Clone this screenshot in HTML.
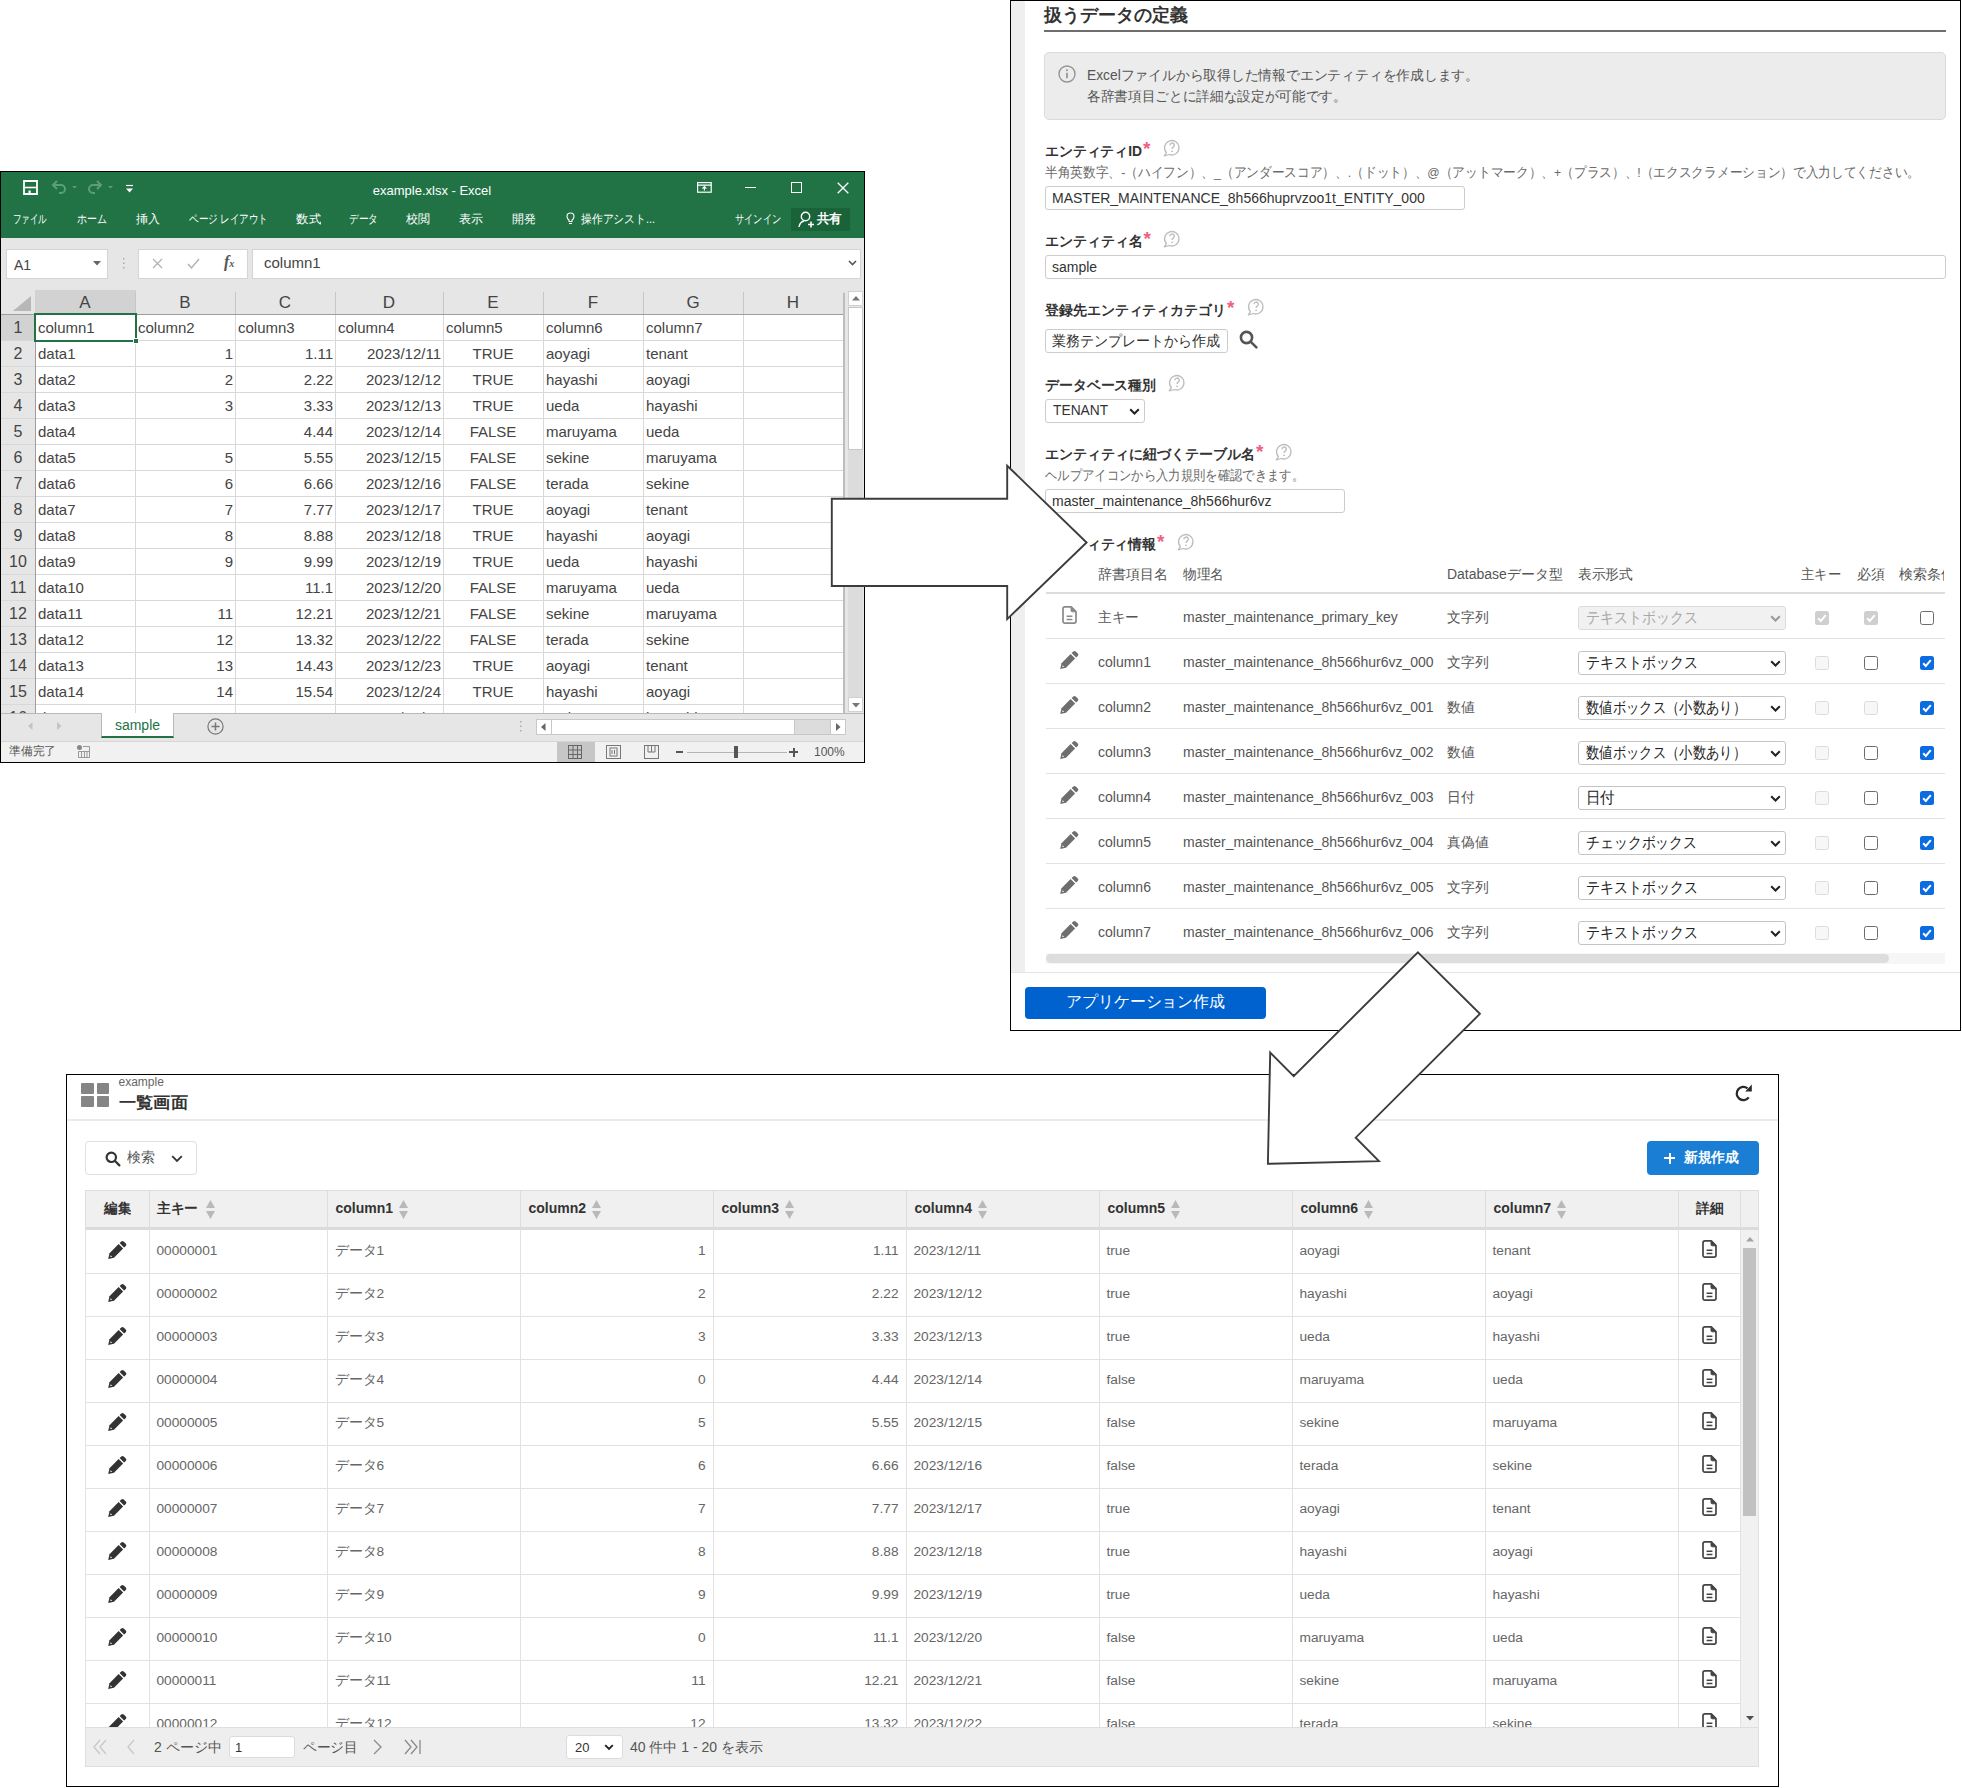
<!DOCTYPE html>
<html lang="ja"><head><meta charset="utf-8"><title>flow</title>
<style>
*{box-sizing:border-box;margin:0;padding:0}
html,body{width:1962px;height:1788px;background:#fff;overflow:hidden}
body{position:relative;font-family:"Liberation Sans",sans-serif;color:#333}
.a{position:absolute}
.t{position:absolute;white-space:nowrap;line-height:1}
.fit{display:inline-block;white-space:nowrap;transform-origin:0 50%}
svg{position:absolute;overflow:visible}
/* ---------- excel ---------- */
#xl{left:0;top:171px;width:865px;height:592px;background:#e6e6e6;border:1px solid #000;overflow:hidden}
#xl .g{background:#217346}
#xl .w{color:#fff}
#xl .cell{position:absolute;white-space:nowrap;font-size:15px;line-height:26px;color:#444;height:26px}
#xl .rh{position:absolute;left:0;width:34px;text-align:center;font-size:16px;line-height:26px;height:26px;color:#444}
#xl .ch{position:absolute;top:118px;height:24px;text-align:center;font-size:17px;line-height:25px;color:#444}
/* ---------- form ---------- */
#fm{left:1010px;top:0;width:951px;height:1031px;background:#fff;border:1px solid #000;overflow:hidden}
#fm .lb{position:absolute;white-space:nowrap;font-size:14px;font-weight:bold;color:#333;line-height:16px}
#fm .rq{position:absolute;color:#f0607f;font-size:19px;line-height:19px;font-weight:bold}
#fm .hint{position:absolute;white-space:nowrap;font-size:13.5px;color:#6a6a6a;line-height:16px}
#fm .in{position:absolute;height:24px;border:1px solid #ccc;border-radius:3px;background:#fff;font-size:14px;line-height:22px;padding-left:6px;color:#333;white-space:nowrap;overflow:hidden}
#fm .td{position:absolute;white-space:nowrap;font-size:14px;color:#555;line-height:16px}
#fm .sel{position:absolute;left:567px;width:208px;height:24px;border:1px solid #c4c4c4;border-radius:3px;background:#fff;font-size:16px;line-height:22px;padding-left:7px;color:#222;white-space:nowrap;overflow:hidden}
#fm .cb{position:absolute;width:14px;height:14px;border-radius:2.5px}
#fm .cb.u{border:1.3px solid #6b6b6b;background:#fff}
#fm .cb.d{border:1px solid #dcdcdc;background:#f7f7f7}
#fm .cb.c{background:#0b6be0}
#fm .cb.dc{background:#cfcfcf}
#fm .rl{position:absolute;left:35px;width:899px;height:1px;background:#e2e2e2}
/* ---------- list ---------- */
#ls{left:66px;top:1074px;width:1713px;height:713px;background:#fff;border:1px solid #000;overflow:hidden}
#ls .th{position:absolute;top:115px;height:39px;font-size:14px;font-weight:bold;color:#333;line-height:36px;white-space:nowrap;border-left:1px solid #ddd}
#ls .c{position:absolute;white-space:nowrap;font-size:13.7px;color:#666;line-height:16px}
#ls .vl{position:absolute;top:155px;width:1px;height:497px;background:#e2e2e2}
#ls .hl{position:absolute;left:18px;width:1655px;height:1px;background:#e2e2e2}
</style></head><body>
<div id="xl" class="a">
<div class="a g" style="left:0;top:0;width:863px;height:66px"></div>
<svg style="left:22px;top:8px" width="16" height="15" viewBox="0 0 16 15"><path d="M1 1h13v13H1z" fill="none" stroke="#fff" stroke-width="1.8"/><path d="M1 7.5h13" stroke="#fff" stroke-width="1.6"/><rect x="5.5" y="10.5" width="2.2" height="3" fill="#fff"/></svg>
<svg style="left:50px;top:8px" width="70" height="14" viewBox="0 0 70 14" fill="none" stroke="#5e9c7b" stroke-width="2"><path d="M2 5h8a4 4 0 0 1 0 8H8"/><path d="M6 1L2 5l4 4"/><path d="M50 5h-8a4 4 0 0 0 0 8h2"/><path d="M46 1l4 4-4 4"/><path d="M21 6l2.5 2.5L26 6z" fill="#5e9c7b" stroke="none"/><path d="M57 6l2.5 2.5L62 6z" fill="#5e9c7b" stroke="none"/></svg>
<svg style="left:125px;top:13px" width="8" height="8" viewBox="0 0 8 8"><path d="M0 .5h7" stroke="#fff" stroke-width="1.2"/><path d="M0 3.5h7L3.5 7.5z" fill="#fff"/></svg>
<div class="t w" style="left:331px;top:12px;width:200px;text-align:center;font-size:13px">example.xlsx - Excel</div>
<svg style="left:696px;top:10px" width="15" height="11" viewBox="0 0 15 11" fill="none" stroke="#fff" stroke-width="1.2"><rect x=".6" y=".6" width="13.6" height="9.6"/><path d="M.6 3.2h13.6M7.4 8.6V4.8M5.4 6.6l2-2 2 2"/></svg>
<div class="a" style="left:744px;top:15px;width:11px;height:1.4px;background:#fff"></div>
<div class="a" style="left:790px;top:10px;width:11px;height:11px;border:1.3px solid #fff"></div>
<svg style="left:836px;top:10px" width="12" height="12" viewBox="0 0 12 12"><path d="M.7.7l10.6 10.6M11.3.7L.7 11.3" stroke="#fff" stroke-width="1.3"/></svg>
<div class="t w" style="left:12px;top:41px;font-size:12px"><span class="fit" style="transform:scaleX(0.7083)">ファイル</span></div>
<div class="t w" style="left:76px;top:41px;font-size:12px"><span class="fit" style="transform:scaleX(0.8333)">ホーム</span></div>
<div class="t w" style="left:135px;top:41px;font-size:12px"><span class="fit" style="transform:scaleX(1.0000)">挿入</span></div>
<div class="t w" style="left:188px;top:41px;font-size:12px"><span class="fit" style="transform:scaleX(0.7952)">ページ レイアウト</span></div>
<div class="t w" style="left:295px;top:41px;font-size:12px"><span class="fit" style="transform:scaleX(1.0417)">数式</span></div>
<div class="t w" style="left:348px;top:41px;font-size:12px"><span class="fit" style="transform:scaleX(0.8056)">データ</span></div>
<div class="t w" style="left:405px;top:41px;font-size:12px"><span class="fit" style="transform:scaleX(1.0000)">校閲</span></div>
<div class="t w" style="left:458px;top:41px;font-size:12px"><span class="fit" style="transform:scaleX(1.0000)">表示</span></div>
<div class="t w" style="left:511px;top:41px;font-size:12px"><span class="fit" style="transform:scaleX(1.0000)">開発</span></div>
<svg style="left:565px;top:40px" width="9" height="13" viewBox="0 0 9 13" fill="none" stroke="#fff" stroke-width="1.1"><path d="M3 9.5V8C1.6 7 1 6 1 4.5a3.5 3.5 0 0 1 7 0C8 6 7.400 7 6 8v1.500z"/><path d="M3 11.500h3"/></svg>
<div class="t w" style="left:580px;top:41px;font-size:12px"><span class="fit" style="transform:scaleX(0.9023)">操作アシスト...</span></div>
<div class="t w" style="left:734px;top:41px;font-size:12px"><span class="fit" style="transform:scaleX(0.7667)">サインイン</span></div>
<div class="a" style="left:790px;top:36px;width:59px;height:23px;background:#1a6238"></div>
<svg style="left:797px;top:39px" width="17" height="17" viewBox="0 0 17 17" fill="none" stroke="#fff" stroke-width="1.4"><circle cx="7.5" cy="5.5" r="4.2"/><path d="M1 16c.6-3.500 3-5.500 5-6"/><path d="M10 13.500h6M13 10.500v6" stroke-width="1.6"/></svg>
<div class="t w" style="left:816px;top:41px;font-size:12.5px;font-weight:bold"><span class="fit" style="transform:scaleX(0.9615)">共有</span></div>
<div class="a" style="left:5px;top:77px;width:102px;height:30px;background:#fff;border:1px solid #d4d4d4"></div>
<div class="t" style="left:13px;top:86px;font-size:14px;color:#444">A1</div>
<svg style="left:92px;top:89px" width="9" height="5" viewBox="0 0 9 5"><path d="M0 0h8L4 4.500z" fill="#666"/></svg>
<svg style="left:122px;top:86px" width="2" height="12" viewBox="0 0 2 12" fill="#aaa"><rect y="0" width="1.500" height="1.500"/><rect y="4.500" width="1.500" height="1.500"/><rect y="9" width="1.500" height="1.500"/></svg>
<div class="a" style="left:137px;top:77px;width:110px;height:30px;background:#fff;border:1px solid #d4d4d4"></div>
<svg style="left:151px;top:86px" width="11" height="11" viewBox="0 0 11 11"><path d="M1 1l9 9M10 1l-9 9" stroke="#b0b0b0" stroke-width="1.2"/></svg>
<svg style="left:186px;top:86px" width="13" height="11" viewBox="0 0 13 11"><path d="M1 6l3.500 4L12 1" fill="none" stroke="#b0b0b0" stroke-width="1.4"/></svg>
<div class="t" style="left:223px;top:82px;font-size:16px;font-family:'Liberation Serif',serif;font-style:italic;font-weight:bold;color:#555">f<span style="font-size:10px">x</span></div>
<div class="a" style="left:251px;top:77px;width:609px;height:30px;background:#fff;border:1px solid #d4d4d4"></div>
<div class="t" style="left:263px;top:83px;font-size:15px;color:#444">column1</div>
<svg style="left:847px;top:88px" width="9" height="6" viewBox="0 0 9 6"><path d="M1 1l3.500 3.500L8 1" fill="none" stroke="#555" stroke-width="1.600"/></svg>
<div class="a" style="left:34px;top:143px;width:808px;height:398px;background:#fff"></div>
<div class="a" style="left:34px;top:118px;width:101px;height:24px;background:#d2d2d2"></div>
<div class="a" style="left:0;top:143px;width:34px;height:26px;background:#d2d2d2"></div>
<svg style="left:12px;top:124px" width="19" height="15" viewBox="0 0 19 15"><path d="M18 0v15H0z" fill="#b7b7b7"/></svg>
<div class="ch" style="left:34px;width:100px">A</div>
<div class="ch" style="left:134px;width:100px">B</div>
<div class="ch" style="left:234px;width:100px">C</div>
<div class="ch" style="left:334px;width:108px">D</div>
<div class="ch" style="left:442px;width:100px">E</div>
<div class="ch" style="left:542px;width:100px">F</div>
<div class="ch" style="left:642px;width:100px">G</div>
<div class="ch" style="left:742px;width:100px">H</div>
<div class="a" style="left:134px;top:120px;width:1px;height:22px;background:#c6c6c6"></div>
<div class="a" style="left:234px;top:120px;width:1px;height:22px;background:#c6c6c6"></div>
<div class="a" style="left:334px;top:120px;width:1px;height:22px;background:#c6c6c6"></div>
<div class="a" style="left:442px;top:120px;width:1px;height:22px;background:#c6c6c6"></div>
<div class="a" style="left:542px;top:120px;width:1px;height:22px;background:#c6c6c6"></div>
<div class="a" style="left:642px;top:120px;width:1px;height:22px;background:#c6c6c6"></div>
<div class="a" style="left:742px;top:120px;width:1px;height:22px;background:#c6c6c6"></div>
<div class="a" style="left:842px;top:120px;width:1px;height:22px;background:#c6c6c6"></div>
<div class="a" style="left:134px;top:143px;width:1px;height:398px;background:#d8d8d8"></div>
<div class="a" style="left:234px;top:143px;width:1px;height:398px;background:#d8d8d8"></div>
<div class="a" style="left:334px;top:143px;width:1px;height:398px;background:#d8d8d8"></div>
<div class="a" style="left:442px;top:143px;width:1px;height:398px;background:#d8d8d8"></div>
<div class="a" style="left:542px;top:143px;width:1px;height:398px;background:#d8d8d8"></div>
<div class="a" style="left:642px;top:143px;width:1px;height:398px;background:#d8d8d8"></div>
<div class="a" style="left:742px;top:143px;width:1px;height:398px;background:#d8d8d8"></div>
<div class="a" style="left:0;top:168px;width:842px;height:1px;background:#d8d8d8"></div>
<div class="rh" style="top:143px">1</div>
<div class="a" style="left:0;top:194px;width:842px;height:1px;background:#d8d8d8"></div>
<div class="rh" style="top:169px">2</div>
<div class="a" style="left:0;top:220px;width:842px;height:1px;background:#d8d8d8"></div>
<div class="rh" style="top:195px">3</div>
<div class="a" style="left:0;top:246px;width:842px;height:1px;background:#d8d8d8"></div>
<div class="rh" style="top:221px">4</div>
<div class="a" style="left:0;top:272px;width:842px;height:1px;background:#d8d8d8"></div>
<div class="rh" style="top:247px">5</div>
<div class="a" style="left:0;top:298px;width:842px;height:1px;background:#d8d8d8"></div>
<div class="rh" style="top:273px">6</div>
<div class="a" style="left:0;top:324px;width:842px;height:1px;background:#d8d8d8"></div>
<div class="rh" style="top:299px">7</div>
<div class="a" style="left:0;top:350px;width:842px;height:1px;background:#d8d8d8"></div>
<div class="rh" style="top:325px">8</div>
<div class="a" style="left:0;top:376px;width:842px;height:1px;background:#d8d8d8"></div>
<div class="rh" style="top:351px">9</div>
<div class="a" style="left:0;top:402px;width:842px;height:1px;background:#d8d8d8"></div>
<div class="rh" style="top:377px">10</div>
<div class="a" style="left:0;top:428px;width:842px;height:1px;background:#d8d8d8"></div>
<div class="rh" style="top:403px">11</div>
<div class="a" style="left:0;top:454px;width:842px;height:1px;background:#d8d8d8"></div>
<div class="rh" style="top:429px">12</div>
<div class="a" style="left:0;top:480px;width:842px;height:1px;background:#d8d8d8"></div>
<div class="rh" style="top:455px">13</div>
<div class="a" style="left:0;top:506px;width:842px;height:1px;background:#d8d8d8"></div>
<div class="rh" style="top:481px">14</div>
<div class="a" style="left:0;top:532px;width:842px;height:1px;background:#d8d8d8"></div>
<div class="rh" style="top:507px">15</div>
<div class="a" style="left:0;top:558px;width:842px;height:1px;background:#d8d8d8"></div>
<div class="rh" style="top:533px">16</div>
<div class="a" style="left:0;top:142px;width:843px;height:1px;background:#9e9e9e"></div>
<div class="a" style="left:34px;top:143px;width:1px;height:398px;background:#9e9e9e"></div>
<div class="a" style="left:842px;top:121px;width:2px;height:420px;background:#bdbdbd"></div>
<div class="cell" style="left:37px;top:143px">column1</div>
<div class="cell" style="left:137px;top:143px">column2</div>
<div class="cell" style="left:237px;top:143px">column3</div>
<div class="cell" style="left:337px;top:143px">column4</div>
<div class="cell" style="left:445px;top:143px">column5</div>
<div class="cell" style="left:545px;top:143px">column6</div>
<div class="cell" style="left:645px;top:143px">column7</div>
<div class="cell" style="left:37px;top:169px">data1</div>
<div class="cell" style="left:134px;width:98px;text-align:right;top:169px">1</div>
<div class="cell" style="left:234px;width:98px;text-align:right;top:169px">1.11</div>
<div class="cell" style="left:334px;width:106px;text-align:right;top:169px">2023/12/11</div>
<div class="cell" style="left:442px;width:100px;text-align:center;top:169px">TRUE</div>
<div class="cell" style="left:545px;top:169px">aoyagi</div>
<div class="cell" style="left:645px;top:169px">tenant</div>
<div class="cell" style="left:37px;top:195px">data2</div>
<div class="cell" style="left:134px;width:98px;text-align:right;top:195px">2</div>
<div class="cell" style="left:234px;width:98px;text-align:right;top:195px">2.22</div>
<div class="cell" style="left:334px;width:106px;text-align:right;top:195px">2023/12/12</div>
<div class="cell" style="left:442px;width:100px;text-align:center;top:195px">TRUE</div>
<div class="cell" style="left:545px;top:195px">hayashi</div>
<div class="cell" style="left:645px;top:195px">aoyagi</div>
<div class="cell" style="left:37px;top:221px">data3</div>
<div class="cell" style="left:134px;width:98px;text-align:right;top:221px">3</div>
<div class="cell" style="left:234px;width:98px;text-align:right;top:221px">3.33</div>
<div class="cell" style="left:334px;width:106px;text-align:right;top:221px">2023/12/13</div>
<div class="cell" style="left:442px;width:100px;text-align:center;top:221px">TRUE</div>
<div class="cell" style="left:545px;top:221px">ueda</div>
<div class="cell" style="left:645px;top:221px">hayashi</div>
<div class="cell" style="left:37px;top:247px">data4</div>
<div class="cell" style="left:234px;width:98px;text-align:right;top:247px">4.44</div>
<div class="cell" style="left:334px;width:106px;text-align:right;top:247px">2023/12/14</div>
<div class="cell" style="left:442px;width:100px;text-align:center;top:247px">FALSE</div>
<div class="cell" style="left:545px;top:247px">maruyama</div>
<div class="cell" style="left:645px;top:247px">ueda</div>
<div class="cell" style="left:37px;top:273px">data5</div>
<div class="cell" style="left:134px;width:98px;text-align:right;top:273px">5</div>
<div class="cell" style="left:234px;width:98px;text-align:right;top:273px">5.55</div>
<div class="cell" style="left:334px;width:106px;text-align:right;top:273px">2023/12/15</div>
<div class="cell" style="left:442px;width:100px;text-align:center;top:273px">FALSE</div>
<div class="cell" style="left:545px;top:273px">sekine</div>
<div class="cell" style="left:645px;top:273px">maruyama</div>
<div class="cell" style="left:37px;top:299px">data6</div>
<div class="cell" style="left:134px;width:98px;text-align:right;top:299px">6</div>
<div class="cell" style="left:234px;width:98px;text-align:right;top:299px">6.66</div>
<div class="cell" style="left:334px;width:106px;text-align:right;top:299px">2023/12/16</div>
<div class="cell" style="left:442px;width:100px;text-align:center;top:299px">FALSE</div>
<div class="cell" style="left:545px;top:299px">terada</div>
<div class="cell" style="left:645px;top:299px">sekine</div>
<div class="cell" style="left:37px;top:325px">data7</div>
<div class="cell" style="left:134px;width:98px;text-align:right;top:325px">7</div>
<div class="cell" style="left:234px;width:98px;text-align:right;top:325px">7.77</div>
<div class="cell" style="left:334px;width:106px;text-align:right;top:325px">2023/12/17</div>
<div class="cell" style="left:442px;width:100px;text-align:center;top:325px">TRUE</div>
<div class="cell" style="left:545px;top:325px">aoyagi</div>
<div class="cell" style="left:645px;top:325px">tenant</div>
<div class="cell" style="left:37px;top:351px">data8</div>
<div class="cell" style="left:134px;width:98px;text-align:right;top:351px">8</div>
<div class="cell" style="left:234px;width:98px;text-align:right;top:351px">8.88</div>
<div class="cell" style="left:334px;width:106px;text-align:right;top:351px">2023/12/18</div>
<div class="cell" style="left:442px;width:100px;text-align:center;top:351px">TRUE</div>
<div class="cell" style="left:545px;top:351px">hayashi</div>
<div class="cell" style="left:645px;top:351px">aoyagi</div>
<div class="cell" style="left:37px;top:377px">data9</div>
<div class="cell" style="left:134px;width:98px;text-align:right;top:377px">9</div>
<div class="cell" style="left:234px;width:98px;text-align:right;top:377px">9.99</div>
<div class="cell" style="left:334px;width:106px;text-align:right;top:377px">2023/12/19</div>
<div class="cell" style="left:442px;width:100px;text-align:center;top:377px">TRUE</div>
<div class="cell" style="left:545px;top:377px">ueda</div>
<div class="cell" style="left:645px;top:377px">hayashi</div>
<div class="cell" style="left:37px;top:403px">data10</div>
<div class="cell" style="left:234px;width:98px;text-align:right;top:403px">11.1</div>
<div class="cell" style="left:334px;width:106px;text-align:right;top:403px">2023/12/20</div>
<div class="cell" style="left:442px;width:100px;text-align:center;top:403px">FALSE</div>
<div class="cell" style="left:545px;top:403px">maruyama</div>
<div class="cell" style="left:645px;top:403px">ueda</div>
<div class="cell" style="left:37px;top:429px">data11</div>
<div class="cell" style="left:134px;width:98px;text-align:right;top:429px">11</div>
<div class="cell" style="left:234px;width:98px;text-align:right;top:429px">12.21</div>
<div class="cell" style="left:334px;width:106px;text-align:right;top:429px">2023/12/21</div>
<div class="cell" style="left:442px;width:100px;text-align:center;top:429px">FALSE</div>
<div class="cell" style="left:545px;top:429px">sekine</div>
<div class="cell" style="left:645px;top:429px">maruyama</div>
<div class="cell" style="left:37px;top:455px">data12</div>
<div class="cell" style="left:134px;width:98px;text-align:right;top:455px">12</div>
<div class="cell" style="left:234px;width:98px;text-align:right;top:455px">13.32</div>
<div class="cell" style="left:334px;width:106px;text-align:right;top:455px">2023/12/22</div>
<div class="cell" style="left:442px;width:100px;text-align:center;top:455px">FALSE</div>
<div class="cell" style="left:545px;top:455px">terada</div>
<div class="cell" style="left:645px;top:455px">sekine</div>
<div class="cell" style="left:37px;top:481px">data13</div>
<div class="cell" style="left:134px;width:98px;text-align:right;top:481px">13</div>
<div class="cell" style="left:234px;width:98px;text-align:right;top:481px">14.43</div>
<div class="cell" style="left:334px;width:106px;text-align:right;top:481px">2023/12/23</div>
<div class="cell" style="left:442px;width:100px;text-align:center;top:481px">TRUE</div>
<div class="cell" style="left:545px;top:481px">aoyagi</div>
<div class="cell" style="left:645px;top:481px">tenant</div>
<div class="cell" style="left:37px;top:507px">data14</div>
<div class="cell" style="left:134px;width:98px;text-align:right;top:507px">14</div>
<div class="cell" style="left:234px;width:98px;text-align:right;top:507px">15.54</div>
<div class="cell" style="left:334px;width:106px;text-align:right;top:507px">2023/12/24</div>
<div class="cell" style="left:442px;width:100px;text-align:center;top:507px">TRUE</div>
<div class="cell" style="left:545px;top:507px">hayashi</div>
<div class="cell" style="left:645px;top:507px">aoyagi</div>
<div class="cell" style="left:37px;top:533px">data15</div>
<div class="cell" style="left:134px;width:98px;text-align:right;top:533px">15</div>
<div class="cell" style="left:234px;width:98px;text-align:right;top:533px">16.65</div>
<div class="cell" style="left:334px;width:106px;text-align:right;top:533px">2023/12/25</div>
<div class="cell" style="left:442px;width:100px;text-align:center;top:533px">TRUE</div>
<div class="cell" style="left:545px;top:533px">ueda</div>
<div class="cell" style="left:645px;top:533px">hayashi</div>
<div class="a" style="left:33px;top:141px;width:103px;height:29px;border:2px solid #217346"></div>
<div class="a" style="left:132px;top:166px;width:6px;height:6px;background:#217346;border:1px solid #fff"></div>
<div class="a" style="left:34px;top:141px;width:101px;height:2px;background:#217346"></div>
<div class="a" style="left:844px;top:118px;width:19px;height:423px;background:#e6e6e6"></div>
<div class="a" style="left:847px;top:136px;width:15px;height:404px;background:#dcdcdc"></div>
<div class="a" style="left:847px;top:119px;width:15px;height:15px;background:#fff;border:1px solid #d0d0d0"></div>
<svg style="left:851px;top:124px" width="8" height="5" viewBox="0 0 8 5"><path d="M0 4.500h8L4 0z" fill="#777"/></svg>
<div class="a" style="left:847px;top:135px;width:15px;height:143px;background:#fff;border:1px solid #c8c8c8"></div>
<div class="a" style="left:847px;top:525px;width:15px;height:15px;background:#fff;border:1px solid #d0d0d0"></div>
<svg style="left:851px;top:531px" width="8" height="5" viewBox="0 0 8 5"><path d="M0 0h8L4 4.500z" fill="#777"/></svg>
<div class="a" style="left:0;top:541px;width:863px;height:28px;background:#e6e6e6;border-top:1px solid #b9b9b9"></div>
<svg style="left:27px;top:550px" width="34" height="9" viewBox="0 0 34 9" fill="#c4c4c4"><path d="M4.500 0v8L0 4z"/><path d="M29 0v8l4.500-4z"/></svg>
<div class="a" style="left:100px;top:541px;width:73px;height:25px;background:#fff;border-left:1px solid #b9b9b9;border-right:1px solid #b9b9b9;border-bottom:2px solid #217346"></div>
<div class="t" style="left:100px;top:546px;width:73px;text-align:center;font-size:14px;color:#217346">sample</div>
<svg style="left:206px;top:546px" width="17" height="17" viewBox="0 0 17 17" fill="none" stroke="#777" stroke-width="1.2"><circle cx="8.500" cy="8.500" r="7.600"/><path d="M8.500 4.500v8M4.500 8.500h8" stroke-width="1.500"/></svg>
<svg style="left:519px;top:549px" width="2" height="12" viewBox="0 0 2 12" fill="#aaa"><rect y="0" width="1.500" height="1.500"/><rect y="4.500" width="1.500" height="1.500"/><rect y="9" width="1.500" height="1.500"/></svg>
<div class="a" style="left:535px;top:547px;width:310px;height:16px;background:#dcdcdc;border:1px solid #c8c8c8"></div>
<div class="a" style="left:535px;top:547px;width:16px;height:16px;background:#fff;border:1px solid #c8c8c8"></div>
<div class="a" style="left:829px;top:547px;width:16px;height:16px;background:#fff;border:1px solid #c8c8c8"></div>
<div class="a" style="left:550px;top:547px;width:244px;height:16px;background:#fff;border:1px solid #c8c8c8"></div>
<svg style="left:540px;top:551px" width="5" height="8" viewBox="0 0 5 8"><path d="M4.500 0v8L0 4z" fill="#666"/></svg>
<svg style="left:835px;top:551px" width="5" height="8" viewBox="0 0 5 8"><path d="M0 0v8l4.500-4z" fill="#666"/></svg>
<div class="a" style="left:0;top:569px;width:863px;height:21px;background:#f1f1f1;border-top:1px solid #d6d6d6"></div>
<div class="t" style="left:8px;top:574px;font-size:11.5px;color:#555"><span class="fit" style="transform:scaleX(0.9792)">準備完了</span></div>
<svg style="left:76px;top:573px" width="13" height="13" viewBox="0 0 13 13"><circle cx="2.500" cy="2.500" r="2.500" fill="#888"/><path d="M6 1.500h6.500v11H1.500V6.500M4.500 6.500v6M7.500 6.500v6M10 6.500v6M1.500 6.500h11" fill="none" stroke="#999" stroke-width="1"/></svg>
<div class="a" style="left:556px;top:570px;width:38px;height:20px;background:#c6c6c6"></div>
<svg style="left:567px;top:573px" width="14" height="14" viewBox="0 0 14 14" fill="none" stroke="#666" stroke-width="1"><rect x=".500" y=".500" width="13" height="13"/><path d="M.500 5h13M.500 9.500h13M5 .500v13M9.500 .500v13"/></svg>
<svg style="left:605px;top:573px" width="15" height="14" viewBox="0 0 15 14" fill="none" stroke="#777" stroke-width="1"><rect x=".500" y=".500" width="14" height="13"/><rect x="4" y="3" width="7" height="8"/><path d="M6 5v4M8.500 5v4"/></svg>
<svg style="left:643px;top:573px" width="15" height="14" viewBox="0 0 15 14" fill="none" stroke="#777" stroke-width="1"><rect x=".500" y=".500" width="14" height="13"/><path d="M4 .500v6.500h7V.500M7.500 .500v6.500"/></svg>
<div class="a" style="left:675px;top:579px;width:7px;height:2px;background:#555"></div>
<div class="a" style="left:686px;top:580px;width:100px;height:1px;background:#b5b5b5"></div>
<div class="a" style="left:733px;top:574px;width:4px;height:12px;background:#555"></div>
<div class="a" style="left:788px;top:579px;width:9px;height:2px;background:#555"></div>
<div class="a" style="left:791.500px;top:575.500px;width:2px;height:9px;background:#555"></div>
<div class="t" style="left:813px;top:574px;font-size:12px;color:#555">100%</div>
</div>
<div id="fm" class="a">
<div class="a" style="left:0;top:0;width:14px;height:971px;background:#efefef"></div>
<div class="t" style="left:33px;top:5px;font-size:18px;font-weight:bold;color:#333"><span class="fit" style="transform:scaleX(1.0000)">扱うデータの定義</span></div>
<div class="a" style="left:33px;top:29px;width:902px;height:2px;background:#6e6e6e"></div>
<div class="a" style="left:33px;top:51px;width:902px;height:68px;background:#ececec;border:1px solid #dadada;border-radius:5px"></div>
<svg style="left:46.500px;top:63.700px" width="18" height="18" viewBox="0 0 18 18" fill="none" stroke="#959595" stroke-width="1.400"><circle cx="9" cy="9" r="8"/><path d="M9 7.800v5.400" stroke-width="1.700"/><circle cx="9" cy="5.200" r="1" fill="#959595" stroke="none"/></svg>
<div class="t" style="left:76px;top:67px;font-size:14px;color:#555"><span class="fit" style="transform:scaleX(0.9843)">Excelファイルから取得した情報でエンティティを作成します。</span></div>
<div class="t" style="left:76px;top:88px;font-size:14px;color:#555"><span class="fit" style="transform:scaleX(0.9756)">各辞書項目ごとに詳細な設定が可能です。</span></div>
<div class="lb" style="left:34px;top:142px"><span class="fit" style="transform:scaleX(0.9898)">エンティティID</span></div>
<div class="rq" style="left:132.0px;top:138px">*</div>
<svg style="left:151.7px;top:138.3px" width="18" height="18" viewBox="0 0 18 18" fill="none" stroke="#bdbdbd" stroke-width="1.3"><path d="M3.400 13.600A7.200 7.200 0 1 1 6.200 15.500L1.300 16.900z" stroke-linejoin="round"/><path d="M6.900 6.300a2.200 2.200 0 1 1 3.300 1.900c-.800 .500-1.100 .900-1.100 1.900" stroke-width="1.400"/><circle cx="9.100" cy="12.300" r=".900" fill="#bdbdbd" stroke="none"/></svg>
<div class="hint" style="left:34px;top:164px"><span class="fit" style="transform:scaleX(0.9066)">半角英数字、-（ハイフン）、_（アンダースコア）、.（ドット）、@（アットマーク）、+（プラス）、!（エクスクラメーション）で入力してください。</span></div>
<div class="in" style="left:34px;top:184.500px;width:420px">MASTER_MAINTENANCE_8h566huprvzoo1t_ENTITY_000</div>
<div class="lb" style="left:34px;top:232px"><span class="fit" style="transform:scaleX(0.9959)">エンティティ名</span></div>
<div class="rq" style="left:132.6px;top:228px">*</div>
<svg style="left:151.7px;top:228.8px" width="18" height="18" viewBox="0 0 18 18" fill="none" stroke="#bdbdbd" stroke-width="1.3"><path d="M3.400 13.600A7.200 7.200 0 1 1 6.200 15.500L1.300 16.900z" stroke-linejoin="round"/><path d="M6.900 6.300a2.200 2.200 0 1 1 3.300 1.900c-.800 .500-1.100 .900-1.100 1.900" stroke-width="1.400"/><circle cx="9.100" cy="12.300" r=".900" fill="#bdbdbd" stroke="none"/></svg>
<div class="in" style="left:34px;top:254px;width:901px">sample</div>
<div class="lb" style="left:34px;top:301px"><span class="fit" style="transform:scaleX(0.9945)">登録先エンティティカテゴリ</span></div>
<div class="rq" style="left:216.0px;top:297px">*</div>
<svg style="left:235.7px;top:297.3px" width="18" height="18" viewBox="0 0 18 18" fill="none" stroke="#bdbdbd" stroke-width="1.3"><path d="M3.400 13.600A7.200 7.200 0 1 1 6.200 15.500L1.300 16.900z" stroke-linejoin="round"/><path d="M6.900 6.300a2.200 2.200 0 1 1 3.300 1.900c-.800 .500-1.100 .900-1.100 1.900" stroke-width="1.400"/><circle cx="9.100" cy="12.300" r=".900" fill="#bdbdbd" stroke="none"/></svg>
<div class="in" style="left:34px;top:328px;width:183px;font-size:14.500px"><span class="fit" style="transform:scaleX(0.9333)">業務テンプレートから作成</span></div>
<svg style="left:228px;top:329px" width="19" height="19" viewBox="0 0 19 19" fill="none" stroke="#555" stroke-width="2.600"><circle cx="7.500" cy="7.500" r="5.600"/><path d="M11.800 11.800l5.600 5.600" stroke-linecap="round"/></svg>
<div class="lb" style="left:34px;top:376px"><span class="fit" style="transform:scaleX(0.9911)">データベース種別</span></div>
<svg style="left:156.7px;top:372.8px" width="18" height="18" viewBox="0 0 18 18" fill="none" stroke="#bdbdbd" stroke-width="1.3"><path d="M3.400 13.600A7.200 7.200 0 1 1 6.200 15.500L1.300 16.900z" stroke-linejoin="round"/><path d="M6.900 6.300a2.200 2.200 0 1 1 3.300 1.900c-.800 .500-1.100 .900-1.100 1.900" stroke-width="1.400"/><circle cx="9.100" cy="12.300" r=".900" fill="#bdbdbd" stroke="none"/></svg>
<div class="in" style="left:34px;top:397.500px;width:100px;font-size:13.800px;padding-left:7px">TENANT<svg style="right:4px;top:8px" width="11" height="7" viewBox="0 0 11 7"><path d="M1.200 1.200l4.300 4.300 4.300-4.300" fill="none" stroke="#222" stroke-width="2"/></svg></div>
<div class="lb" style="left:34px;top:445px"><span class="fit" style="transform:scaleX(1.0000)">エンティティに紐づくテーブル名</span></div>
<div class="rq" style="left:245.0px;top:441px">*</div>
<svg style="left:263.7px;top:441.8px" width="18" height="18" viewBox="0 0 18 18" fill="none" stroke="#bdbdbd" stroke-width="1.3"><path d="M3.400 13.600A7.200 7.200 0 1 1 6.200 15.500L1.300 16.900z" stroke-linejoin="round"/><path d="M6.900 6.300a2.200 2.200 0 1 1 3.300 1.900c-.800 .500-1.100 .900-1.100 1.900" stroke-width="1.400"/><circle cx="9.100" cy="12.300" r=".900" fill="#bdbdbd" stroke="none"/></svg>
<div class="hint" style="left:34px;top:467px"><span class="fit" style="transform:scaleX(0.8810)">ヘルプアイコンから入力規則を確認できます。</span></div>
<div class="in" style="left:34px;top:488px;width:300px">master_maintenance_8h566hur6vz</div>
<div class="lb" style="left:34px;top:535px"><span class="fit" style="transform:scaleX(0.9911)">エンティティ情報</span></div>
<div class="rq" style="left:146.0px;top:531px">*</div>
<svg style="left:165.7px;top:531.8px" width="18" height="18" viewBox="0 0 18 18" fill="none" stroke="#bdbdbd" stroke-width="1.3"><path d="M3.400 13.600A7.200 7.200 0 1 1 6.200 15.500L1.300 16.900z" stroke-linejoin="round"/><path d="M6.900 6.300a2.200 2.200 0 1 1 3.300 1.900c-.800 .500-1.100 .900-1.100 1.900" stroke-width="1.400"/><circle cx="9.100" cy="12.300" r=".900" fill="#bdbdbd" stroke="none"/></svg>
<div class="td" style="left:87px;top:565px"><span class="fit" style="transform:scaleX(1.0000)">辞書項目名</span></div>
<div class="td" style="left:172px;top:565px"><span class="fit" style="transform:scaleX(0.9762)">物理名</span></div>
<div class="td" style="left:436px;top:565px"><span class="fit" style="transform:scaleX(0.9980)">Databaseデータ型</span></div>
<div class="td" style="left:567px;top:565px"><span class="fit" style="transform:scaleX(0.9821)">表示形式</span></div>
<div class="td" style="left:790px;top:565px"><span class="fit" style="transform:scaleX(0.9524)">主キー</span></div>
<div class="td" style="left:846px;top:565px"><span class="fit" style="transform:scaleX(1.0000)">必須</span></div>
<div class="td" style="left:888px;top:565px;width:45px;overflow:hidden"><span class="fit" style="transform:scaleX(1.0000)">検索条件</span></div>
<div class="a" style="left:35px;top:591px;width:899px;height:2px;background:#dcdcdc"></div>
<svg style="left:50.5px;top:604.5px" width="15" height="18" viewBox="0 0 15 18" fill="none" stroke="#8a8a8a" stroke-width="1.7"><path d="M2.900 .900H9.300L14 5.600V15.300a1.900 1.900 0 0 1-1.900 1.900H2.900A1.900 1.900 0 0 1 1 15.300V2.800A1.900 1.900 0 0 1 2.900 .900Z" stroke-linejoin="round"/><path d="M9 .900V4.400a1.400 1.400 0 0 0 1.400 1.400H14Z" fill="#8a8a8a" stroke-width="1"/><path d="M4.600 10.200h5.800M4.600 13.400h5.800" stroke-width="1.500"/></svg>
<div class="td" style="left:87px;top:608px"><span class="fit" style="transform:scaleX(0.9762)">主キー</span></div>
<div class="td" style="left:172px;top:608px">master_maintenance_primary_key</div>
<div class="td" style="left:436px;top:608px"><span class="fit" style="transform:scaleX(0.9857)">文字列</span></div>
<div class="sel" style="top:605px;background:#f1f1f1;color:#a8a8a8;border-color:#dcdcdc"><span class="fit" style="transform:scaleX(0.8750)">テキストボックス</span><svg style="right:4px;top:8px" width="11" height="7" viewBox="0 0 11 7"><path d="M1.200 1.200l4.300 4.300 4.300-4.300" fill="none" stroke="#9a9a9a" stroke-width="2"/></svg></div>
<div class="cb dc" style="left:803.5px;top:609.5px"><svg style="left:0;top:0" width="14" height="14" viewBox="0 0 14 14"><path d="M3.200 7.300l2.600 2.700 5-5.800" fill="none" stroke="#fff" stroke-width="2"/></svg></div>
<div class="cb dc" style="left:852.7px;top:609.5px"><svg style="left:0;top:0" width="14" height="14" viewBox="0 0 14 14"><path d="M3.200 7.300l2.600 2.700 5-5.800" fill="none" stroke="#fff" stroke-width="2"/></svg></div>
<div class="cb u" style="left:908.6px;top:609.5px"></div>
<div class="rl" style="top:637px"></div>
<svg style="left:48.5px;top:649.5px" width="19" height="18" viewBox="0 0 19 18" fill="#6e6e6e"><path d="M.2 18L1.500 12.200L10.600 3.100L15.100 7.600L6 16.700Z"/><path d="M11.600 2.100L13.300 .500a1.700 1.700 0 0 1 2.400 0L17.800 2.600a1.700 1.700 0 0 1 0 2.400L16.100 6.600Z"/><path d="M2.700 14.200L4.200 15.700L2.300 16.100Z" fill="#fff"/></svg>
<div class="td" style="left:87px;top:653px">column1</div>
<div class="td" style="left:172px;top:653px">master_maintenance_8h566hur6vz_000</div>
<div class="td" style="left:436px;top:653px"><span class="fit" style="transform:scaleX(0.9857)">文字列</span></div>
<div class="sel" style="top:650px"><span class="fit" style="transform:scaleX(0.8750)">テキストボックス</span><svg style="right:4px;top:8px" width="11" height="7" viewBox="0 0 11 7"><path d="M1.200 1.200l4.300 4.300 4.300-4.300" fill="none" stroke="#222" stroke-width="2"/></svg></div>
<div class="cb d" style="left:803.5px;top:654.5px"></div>
<div class="cb u" style="left:852.7px;top:654.5px"></div>
<div class="cb c" style="left:908.6px;top:654.5px"><svg style="left:0;top:0" width="14" height="14" viewBox="0 0 14 14"><path d="M3.200 7.300l2.600 2.700 5-5.800" fill="none" stroke="#fff" stroke-width="2"/></svg></div>
<div class="rl" style="top:682px"></div>
<svg style="left:48.5px;top:694.5px" width="19" height="18" viewBox="0 0 19 18" fill="#6e6e6e"><path d="M.2 18L1.500 12.200L10.600 3.100L15.100 7.600L6 16.700Z"/><path d="M11.600 2.100L13.300 .500a1.700 1.700 0 0 1 2.400 0L17.800 2.600a1.700 1.700 0 0 1 0 2.400L16.100 6.600Z"/><path d="M2.700 14.200L4.200 15.700L2.300 16.100Z" fill="#fff"/></svg>
<div class="td" style="left:87px;top:698px">column2</div>
<div class="td" style="left:172px;top:698px">master_maintenance_8h566hur6vz_001</div>
<div class="td" style="left:436px;top:698px"><span class="fit" style="transform:scaleX(0.9857)">数値</span></div>
<div class="sel" style="top:695px"><span class="fit" style="transform:scaleX(0.8333)">数値ボックス（小数あり）</span><svg style="right:4px;top:8px" width="11" height="7" viewBox="0 0 11 7"><path d="M1.200 1.200l4.300 4.300 4.300-4.300" fill="none" stroke="#222" stroke-width="2"/></svg></div>
<div class="cb d" style="left:803.5px;top:699.5px"></div>
<div class="cb d" style="left:852.7px;top:699.5px"></div>
<div class="cb c" style="left:908.6px;top:699.5px"><svg style="left:0;top:0" width="14" height="14" viewBox="0 0 14 14"><path d="M3.200 7.300l2.600 2.700 5-5.800" fill="none" stroke="#fff" stroke-width="2"/></svg></div>
<div class="rl" style="top:727px"></div>
<svg style="left:48.5px;top:739.5px" width="19" height="18" viewBox="0 0 19 18" fill="#6e6e6e"><path d="M.2 18L1.500 12.200L10.600 3.100L15.100 7.600L6 16.700Z"/><path d="M11.600 2.100L13.300 .500a1.700 1.700 0 0 1 2.400 0L17.800 2.600a1.700 1.700 0 0 1 0 2.400L16.100 6.600Z"/><path d="M2.700 14.200L4.200 15.700L2.300 16.100Z" fill="#fff"/></svg>
<div class="td" style="left:87px;top:743px">column3</div>
<div class="td" style="left:172px;top:743px">master_maintenance_8h566hur6vz_002</div>
<div class="td" style="left:436px;top:743px"><span class="fit" style="transform:scaleX(0.9857)">数値</span></div>
<div class="sel" style="top:740px"><span class="fit" style="transform:scaleX(0.8333)">数値ボックス（小数あり）</span><svg style="right:4px;top:8px" width="11" height="7" viewBox="0 0 11 7"><path d="M1.200 1.200l4.300 4.300 4.300-4.300" fill="none" stroke="#222" stroke-width="2"/></svg></div>
<div class="cb d" style="left:803.5px;top:744.5px"></div>
<div class="cb u" style="left:852.7px;top:744.5px"></div>
<div class="cb c" style="left:908.6px;top:744.5px"><svg style="left:0;top:0" width="14" height="14" viewBox="0 0 14 14"><path d="M3.200 7.300l2.600 2.700 5-5.800" fill="none" stroke="#fff" stroke-width="2"/></svg></div>
<div class="rl" style="top:772px"></div>
<svg style="left:48.5px;top:784.5px" width="19" height="18" viewBox="0 0 19 18" fill="#6e6e6e"><path d="M.2 18L1.500 12.200L10.600 3.100L15.100 7.600L6 16.700Z"/><path d="M11.600 2.100L13.300 .500a1.700 1.700 0 0 1 2.400 0L17.800 2.600a1.700 1.700 0 0 1 0 2.400L16.100 6.600Z"/><path d="M2.700 14.200L4.200 15.700L2.300 16.100Z" fill="#fff"/></svg>
<div class="td" style="left:87px;top:788px">column4</div>
<div class="td" style="left:172px;top:788px">master_maintenance_8h566hur6vz_003</div>
<div class="td" style="left:436px;top:788px"><span class="fit" style="transform:scaleX(0.9857)">日付</span></div>
<div class="sel" style="top:785px"><span class="fit" style="transform:scaleX(0.9062)">日付</span><svg style="right:4px;top:8px" width="11" height="7" viewBox="0 0 11 7"><path d="M1.200 1.200l4.300 4.300 4.300-4.300" fill="none" stroke="#222" stroke-width="2"/></svg></div>
<div class="cb d" style="left:803.5px;top:789.5px"></div>
<div class="cb u" style="left:852.7px;top:789.5px"></div>
<div class="cb c" style="left:908.6px;top:789.5px"><svg style="left:0;top:0" width="14" height="14" viewBox="0 0 14 14"><path d="M3.200 7.300l2.600 2.700 5-5.800" fill="none" stroke="#fff" stroke-width="2"/></svg></div>
<div class="rl" style="top:817px"></div>
<svg style="left:48.5px;top:829.5px" width="19" height="18" viewBox="0 0 19 18" fill="#6e6e6e"><path d="M.2 18L1.500 12.200L10.600 3.100L15.100 7.600L6 16.700Z"/><path d="M11.600 2.100L13.300 .500a1.700 1.700 0 0 1 2.400 0L17.800 2.600a1.700 1.700 0 0 1 0 2.400L16.100 6.600Z"/><path d="M2.700 14.200L4.200 15.700L2.300 16.100Z" fill="#fff"/></svg>
<div class="td" style="left:87px;top:833px">column5</div>
<div class="td" style="left:172px;top:833px">master_maintenance_8h566hur6vz_004</div>
<div class="td" style="left:436px;top:833px"><span class="fit" style="transform:scaleX(0.9857)">真偽値</span></div>
<div class="sel" style="top:830px"><span class="fit" style="transform:scaleX(0.8672)">チェックボックス</span><svg style="right:4px;top:8px" width="11" height="7" viewBox="0 0 11 7"><path d="M1.200 1.200l4.300 4.300 4.300-4.300" fill="none" stroke="#222" stroke-width="2"/></svg></div>
<div class="cb d" style="left:803.5px;top:834.5px"></div>
<div class="cb u" style="left:852.7px;top:834.5px"></div>
<div class="cb c" style="left:908.6px;top:834.5px"><svg style="left:0;top:0" width="14" height="14" viewBox="0 0 14 14"><path d="M3.200 7.300l2.600 2.700 5-5.800" fill="none" stroke="#fff" stroke-width="2"/></svg></div>
<div class="rl" style="top:862px"></div>
<svg style="left:48.5px;top:874.5px" width="19" height="18" viewBox="0 0 19 18" fill="#6e6e6e"><path d="M.2 18L1.500 12.200L10.600 3.100L15.100 7.600L6 16.700Z"/><path d="M11.600 2.100L13.300 .500a1.700 1.700 0 0 1 2.400 0L17.800 2.600a1.700 1.700 0 0 1 0 2.400L16.100 6.600Z"/><path d="M2.700 14.200L4.200 15.700L2.300 16.100Z" fill="#fff"/></svg>
<div class="td" style="left:87px;top:878px">column6</div>
<div class="td" style="left:172px;top:878px">master_maintenance_8h566hur6vz_005</div>
<div class="td" style="left:436px;top:878px"><span class="fit" style="transform:scaleX(0.9857)">文字列</span></div>
<div class="sel" style="top:875px"><span class="fit" style="transform:scaleX(0.8750)">テキストボックス</span><svg style="right:4px;top:8px" width="11" height="7" viewBox="0 0 11 7"><path d="M1.200 1.200l4.300 4.300 4.300-4.300" fill="none" stroke="#222" stroke-width="2"/></svg></div>
<div class="cb d" style="left:803.5px;top:879.5px"></div>
<div class="cb u" style="left:852.7px;top:879.5px"></div>
<div class="cb c" style="left:908.6px;top:879.5px"><svg style="left:0;top:0" width="14" height="14" viewBox="0 0 14 14"><path d="M3.200 7.300l2.600 2.700 5-5.800" fill="none" stroke="#fff" stroke-width="2"/></svg></div>
<div class="rl" style="top:907px"></div>
<svg style="left:48.5px;top:919.5px" width="19" height="18" viewBox="0 0 19 18" fill="#6e6e6e"><path d="M.2 18L1.500 12.200L10.600 3.100L15.100 7.600L6 16.700Z"/><path d="M11.600 2.100L13.300 .500a1.700 1.700 0 0 1 2.400 0L17.800 2.600a1.700 1.700 0 0 1 0 2.400L16.100 6.600Z"/><path d="M2.700 14.200L4.200 15.700L2.300 16.100Z" fill="#fff"/></svg>
<div class="td" style="left:87px;top:923px">column7</div>
<div class="td" style="left:172px;top:923px">master_maintenance_8h566hur6vz_006</div>
<div class="td" style="left:436px;top:923px"><span class="fit" style="transform:scaleX(0.9857)">文字列</span></div>
<div class="sel" style="top:920px"><span class="fit" style="transform:scaleX(0.8750)">テキストボックス</span><svg style="right:4px;top:8px" width="11" height="7" viewBox="0 0 11 7"><path d="M1.200 1.200l4.300 4.300 4.300-4.300" fill="none" stroke="#222" stroke-width="2"/></svg></div>
<div class="cb d" style="left:803.5px;top:924.5px"></div>
<div class="cb u" style="left:852.7px;top:924.5px"></div>
<div class="cb c" style="left:908.6px;top:924.5px"><svg style="left:0;top:0" width="14" height="14" viewBox="0 0 14 14"><path d="M3.200 7.300l2.600 2.700 5-5.800" fill="none" stroke="#fff" stroke-width="2"/></svg></div>
<div class="a" style="left:35px;top:952px;width:899px;height:11px;background:#f6f6f6"></div>
<div class="a" style="left:35px;top:953px;width:843px;height:9px;background:#dddddd;border-radius:5px"></div>
<div class="a" style="left:0;top:971px;width:949px;height:1px;background:#e4e4e4"></div>
<div class="a" style="left:13.500px;top:986px;width:241px;height:32px;background:#0062cf;border-radius:4px;color:#fff;font-size:16px;line-height:30px;white-space:nowrap"><span class="t" style="left:41px;top:7px"><span class="fit" style="transform:scaleX(0.9938)">アプリケーション作成</span></span></div>
</div>
<div id="ls" class="a">
<div class="a" style="left:14px;top:8px;width:12.500px;height:10.500px;background:#858585;border-radius:1px"></div>
<div class="a" style="left:29.5px;top:8px;width:12.500px;height:10.500px;background:#858585;border-radius:1px"></div>
<div class="a" style="left:14px;top:21px;width:12.500px;height:10.500px;background:#858585;border-radius:1px"></div>
<div class="a" style="left:29.5px;top:21px;width:12.500px;height:10.500px;background:#858585;border-radius:1px"></div>
<div class="t" style="left:51.500px;top:0.5px;font-size:12px;color:#666">example</div>
<div class="t" style="left:51.500px;top:19.5px;font-size:16px;font-weight:bold;color:#333"><span class="fit" style="transform:scaleX(1.0781)">一覧画面</span></div>
<div class="a" style="left:0;top:43.500px;width:1711px;height:2px;background:#ebebeb"></div>
<svg style="left:1666.500px;top:9.400px" width="19" height="18" viewBox="0 0 19 18" fill="none" stroke="#2a2a2a" stroke-width="2.300"><path d="M14.700 13.300A6.600 6.600 0 1 1 13.500 4.400"/><path d="M17.800 .600v7h-6.600z" fill="#2a2a2a" stroke="none"/></svg>
<div class="a" style="left:18px;top:65.500px;width:112px;height:34.500px;border:1px solid #dfdfdf;border-radius:4px;background:#fff"></div>
<svg style="left:38px;top:76px" width="16" height="16" viewBox="0 0 16 16" fill="none" stroke="#333" stroke-width="2.200"><circle cx="6.300" cy="6.300" r="4.700"/><path d="M9.800 9.800l4.600 4.600" stroke-linecap="round"/></svg>
<div class="t" style="left:60px;top:76px;font-size:13.500px;color:#555"><span class="fit" style="transform:scaleX(1.0000)">検索</span></div>
<svg style="left:104px;top:80px" width="12" height="8" viewBox="0 0 12 8"><path d="M1.200 1.200l4.800 4.800 4.800-4.800" fill="none" stroke="#333" stroke-width="1.800"/></svg>
<div class="a" style="left:1580px;top:65.500px;width:112px;height:34.500px;border-radius:4px;background:#1a7fd4"></div>
<div class="a" style="left:1597px;top:82px;width:11px;height:2px;background:#fff"></div><div class="a" style="left:1601.500px;top:77.500px;width:2px;height:11px;background:#fff"></div>
<div class="t" style="left:1617px;top:76px;font-size:13.500px;font-weight:bold;color:#fff"><span class="fit" style="transform:scaleX(0.9821)">新規作成</span></div>
<div class="a" style="left:18px;top:115px;width:1674px;height:40px;background:#f0f0f0;border:1px solid #dedede;border-bottom:3px solid #dbdbdb"></div>
<div class="th" style="left:18px;width:64px;border-left:none"><span class="t" style="left:18.500px;top:11px"><span class="fit" style="transform:scaleX(0.9643)">編集</span></span></div>
<div class="th" style="left:82px;width:178px"><span class="t" style="left:6.500px;top:11px"><span class="fit" style="transform:scaleX(0.9762)">主キー</span></span></div>
<svg style="left:138.5px;top:125px" width="9" height="19" viewBox="0 0 9 19" fill="#b9b9b9"><path d="M4.500 0L9 8H0z"/><path d="M0 11h9l-4.500 8z"/></svg>
<div class="th" style="left:260px;width:193px;padding-left:7.500px">column1</div>
<svg style="left:332.0px;top:125px" width="9" height="19" viewBox="0 0 9 19" fill="#b9b9b9"><path d="M4.500 0L9 8H0z"/><path d="M0 11h9l-4.500 8z"/></svg>
<div class="th" style="left:453px;width:193px;padding-left:7.500px">column2</div>
<svg style="left:525.0px;top:125px" width="9" height="19" viewBox="0 0 9 19" fill="#b9b9b9"><path d="M4.500 0L9 8H0z"/><path d="M0 11h9l-4.500 8z"/></svg>
<div class="th" style="left:646px;width:193px;padding-left:7.500px">column3</div>
<svg style="left:718.0px;top:125px" width="9" height="19" viewBox="0 0 9 19" fill="#b9b9b9"><path d="M4.500 0L9 8H0z"/><path d="M0 11h9l-4.500 8z"/></svg>
<div class="th" style="left:839px;width:193px;padding-left:7.500px">column4</div>
<svg style="left:911.0px;top:125px" width="9" height="19" viewBox="0 0 9 19" fill="#b9b9b9"><path d="M4.500 0L9 8H0z"/><path d="M0 11h9l-4.500 8z"/></svg>
<div class="th" style="left:1032px;width:193px;padding-left:7.500px">column5</div>
<svg style="left:1104.0px;top:125px" width="9" height="19" viewBox="0 0 9 19" fill="#b9b9b9"><path d="M4.500 0L9 8H0z"/><path d="M0 11h9l-4.500 8z"/></svg>
<div class="th" style="left:1225px;width:193px;padding-left:7.500px">column6</div>
<svg style="left:1297.0px;top:125px" width="9" height="19" viewBox="0 0 9 19" fill="#b9b9b9"><path d="M4.500 0L9 8H0z"/><path d="M0 11h9l-4.500 8z"/></svg>
<div class="th" style="left:1418px;width:193px;padding-left:7.500px">column7</div>
<svg style="left:1490.0px;top:125px" width="9" height="19" viewBox="0 0 9 19" fill="#b9b9b9"><path d="M4.500 0L9 8H0z"/><path d="M0 11h9l-4.500 8z"/></svg>
<div class="th" style="left:1611px;width:62px"><span class="t" style="left:17px;top:11px"><span class="fit" style="transform:scaleX(0.9821)">詳細</span></span></div>
<div class="th" style="left:1673px;width:18px"></div>
<div class="vl" style="left:18px"></div>
<div class="vl" style="left:82px"></div>
<div class="vl" style="left:260px"></div>
<div class="vl" style="left:453px"></div>
<div class="vl" style="left:646px"></div>
<div class="vl" style="left:839px"></div>
<div class="vl" style="left:1032px"></div>
<div class="vl" style="left:1225px"></div>
<div class="vl" style="left:1418px"></div>
<div class="vl" style="left:1611px"></div>
<div class="vl" style="left:1673px"></div>
<div class="vl" style="left:1691px"></div>
<div class="a" style="left:1674px;top:155px;width:17px;height:497px;background:#f1f1f1"></div>
<div class="a" style="left:1676px;top:172.500px;width:13px;height:268px;background:#c1c1c1"></div>
<svg style="left:1679px;top:162px" width="8" height="5" viewBox="0 0 8 5"><path d="M0 4.500h8L4 0z" fill="#a3a3a3"/></svg>
<svg style="left:1679px;top:641px" width="8" height="5" viewBox="0 0 8 5"><path d="M0 0h8L4 4.500z" fill="#505050"/></svg>
<div class="hl" style="top:197.5px"></div>
<svg style="left:41.0px;top:165.5px" width="19" height="18" viewBox="0 0 19 18" fill="#333"><path d="M.2 18L1.500 12.200L10.600 3.100L15.100 7.600L6 16.700Z"/><path d="M11.600 2.100L13.300 .500a1.700 1.700 0 0 1 2.400 0L17.800 2.600a1.700 1.700 0 0 1 0 2.400L16.100 6.600Z"/><path d="M2.700 14.200L4.200 15.700L2.300 16.100Z" fill="#fff"/></svg>
<div class="c" style="left:89.500px;top:167.5px">00000001</div>
<div class="c" style="left:267.500px;top:167.5px"><span class="fit" style="transform:scaleX(1.0000);margin-right:-0.00px">データ</span>1</div>
<div class="c" style="left:453px;width:185.500px;text-align:right;top:167.5px">1</div>
<div class="c" style="left:646px;width:185.500px;text-align:right;top:167.5px">1.11</div>
<div class="c" style="left:846.500px;top:167.5px">2023/12/11</div>
<div class="c" style="left:1039.500px;top:167.5px">true</div>
<div class="c" style="left:1232.500px;top:167.5px">aoyagi</div>
<div class="c" style="left:1425.500px;top:167.5px">tenant</div>
<svg style="left:1635.0px;top:165.0px" width="15" height="18" viewBox="0 0 15 18" fill="none" stroke="#444" stroke-width="1.7"><path d="M2.900 .900H9.300L14 5.600V15.300a1.900 1.900 0 0 1-1.900 1.900H2.900A1.900 1.900 0 0 1 1 15.300V2.800A1.900 1.900 0 0 1 2.900 .900Z" stroke-linejoin="round"/><path d="M9 .900V4.400a1.400 1.400 0 0 0 1.400 1.400H14Z" fill="#444" stroke-width="1"/><path d="M4.600 10.200h5.800M4.600 13.400h5.800" stroke-width="1.500"/></svg>
<div class="hl" style="top:240.5px"></div>
<svg style="left:41.0px;top:208.5px" width="19" height="18" viewBox="0 0 19 18" fill="#333"><path d="M.2 18L1.500 12.200L10.600 3.100L15.100 7.600L6 16.700Z"/><path d="M11.600 2.100L13.300 .500a1.700 1.700 0 0 1 2.400 0L17.800 2.600a1.700 1.700 0 0 1 0 2.400L16.100 6.600Z"/><path d="M2.700 14.200L4.200 15.700L2.300 16.100Z" fill="#fff"/></svg>
<div class="c" style="left:89.500px;top:210.5px">00000002</div>
<div class="c" style="left:267.500px;top:210.5px"><span class="fit" style="transform:scaleX(1.0000);margin-right:-0.00px">データ</span>2</div>
<div class="c" style="left:453px;width:185.500px;text-align:right;top:210.5px">2</div>
<div class="c" style="left:646px;width:185.500px;text-align:right;top:210.5px">2.22</div>
<div class="c" style="left:846.500px;top:210.5px">2023/12/12</div>
<div class="c" style="left:1039.500px;top:210.5px">true</div>
<div class="c" style="left:1232.500px;top:210.5px">hayashi</div>
<div class="c" style="left:1425.500px;top:210.5px">aoyagi</div>
<svg style="left:1635.0px;top:208.0px" width="15" height="18" viewBox="0 0 15 18" fill="none" stroke="#444" stroke-width="1.7"><path d="M2.900 .900H9.300L14 5.600V15.300a1.900 1.900 0 0 1-1.900 1.900H2.900A1.900 1.900 0 0 1 1 15.300V2.800A1.900 1.900 0 0 1 2.900 .900Z" stroke-linejoin="round"/><path d="M9 .900V4.400a1.400 1.400 0 0 0 1.400 1.400H14Z" fill="#444" stroke-width="1"/><path d="M4.600 10.200h5.800M4.600 13.400h5.800" stroke-width="1.500"/></svg>
<div class="hl" style="top:283.5px"></div>
<svg style="left:41.0px;top:251.5px" width="19" height="18" viewBox="0 0 19 18" fill="#333"><path d="M.2 18L1.500 12.200L10.600 3.100L15.100 7.600L6 16.700Z"/><path d="M11.600 2.100L13.300 .500a1.700 1.700 0 0 1 2.400 0L17.800 2.600a1.700 1.700 0 0 1 0 2.400L16.100 6.600Z"/><path d="M2.700 14.200L4.200 15.700L2.300 16.100Z" fill="#fff"/></svg>
<div class="c" style="left:89.500px;top:253.5px">00000003</div>
<div class="c" style="left:267.500px;top:253.5px"><span class="fit" style="transform:scaleX(1.0000);margin-right:-0.00px">データ</span>3</div>
<div class="c" style="left:453px;width:185.500px;text-align:right;top:253.5px">3</div>
<div class="c" style="left:646px;width:185.500px;text-align:right;top:253.5px">3.33</div>
<div class="c" style="left:846.500px;top:253.5px">2023/12/13</div>
<div class="c" style="left:1039.500px;top:253.5px">true</div>
<div class="c" style="left:1232.500px;top:253.5px">ueda</div>
<div class="c" style="left:1425.500px;top:253.5px">hayashi</div>
<svg style="left:1635.0px;top:251.0px" width="15" height="18" viewBox="0 0 15 18" fill="none" stroke="#444" stroke-width="1.7"><path d="M2.900 .900H9.300L14 5.600V15.300a1.900 1.900 0 0 1-1.900 1.900H2.900A1.900 1.900 0 0 1 1 15.300V2.800A1.900 1.900 0 0 1 2.900 .900Z" stroke-linejoin="round"/><path d="M9 .900V4.400a1.400 1.400 0 0 0 1.400 1.400H14Z" fill="#444" stroke-width="1"/><path d="M4.600 10.200h5.800M4.600 13.400h5.800" stroke-width="1.500"/></svg>
<div class="hl" style="top:326.5px"></div>
<svg style="left:41.0px;top:294.5px" width="19" height="18" viewBox="0 0 19 18" fill="#333"><path d="M.2 18L1.500 12.200L10.600 3.100L15.100 7.600L6 16.700Z"/><path d="M11.600 2.100L13.300 .500a1.700 1.700 0 0 1 2.400 0L17.800 2.600a1.700 1.700 0 0 1 0 2.400L16.100 6.600Z"/><path d="M2.700 14.200L4.200 15.700L2.300 16.100Z" fill="#fff"/></svg>
<div class="c" style="left:89.500px;top:296.5px">00000004</div>
<div class="c" style="left:267.500px;top:296.5px"><span class="fit" style="transform:scaleX(1.0000);margin-right:-0.00px">データ</span>4</div>
<div class="c" style="left:453px;width:185.500px;text-align:right;top:296.5px">0</div>
<div class="c" style="left:646px;width:185.500px;text-align:right;top:296.5px">4.44</div>
<div class="c" style="left:846.500px;top:296.5px">2023/12/14</div>
<div class="c" style="left:1039.500px;top:296.5px">false</div>
<div class="c" style="left:1232.500px;top:296.5px">maruyama</div>
<div class="c" style="left:1425.500px;top:296.5px">ueda</div>
<svg style="left:1635.0px;top:294.0px" width="15" height="18" viewBox="0 0 15 18" fill="none" stroke="#444" stroke-width="1.7"><path d="M2.900 .900H9.300L14 5.600V15.300a1.900 1.900 0 0 1-1.900 1.900H2.900A1.900 1.900 0 0 1 1 15.300V2.800A1.900 1.900 0 0 1 2.900 .900Z" stroke-linejoin="round"/><path d="M9 .900V4.400a1.400 1.400 0 0 0 1.400 1.400H14Z" fill="#444" stroke-width="1"/><path d="M4.600 10.200h5.800M4.600 13.400h5.800" stroke-width="1.500"/></svg>
<div class="hl" style="top:369.5px"></div>
<svg style="left:41.0px;top:337.5px" width="19" height="18" viewBox="0 0 19 18" fill="#333"><path d="M.2 18L1.500 12.200L10.600 3.100L15.100 7.600L6 16.700Z"/><path d="M11.600 2.100L13.300 .500a1.700 1.700 0 0 1 2.400 0L17.800 2.600a1.700 1.700 0 0 1 0 2.400L16.100 6.600Z"/><path d="M2.700 14.200L4.200 15.700L2.300 16.100Z" fill="#fff"/></svg>
<div class="c" style="left:89.500px;top:339.5px">00000005</div>
<div class="c" style="left:267.500px;top:339.5px"><span class="fit" style="transform:scaleX(1.0000);margin-right:-0.00px">データ</span>5</div>
<div class="c" style="left:453px;width:185.500px;text-align:right;top:339.5px">5</div>
<div class="c" style="left:646px;width:185.500px;text-align:right;top:339.5px">5.55</div>
<div class="c" style="left:846.500px;top:339.5px">2023/12/15</div>
<div class="c" style="left:1039.500px;top:339.5px">false</div>
<div class="c" style="left:1232.500px;top:339.5px">sekine</div>
<div class="c" style="left:1425.500px;top:339.5px">maruyama</div>
<svg style="left:1635.0px;top:337.0px" width="15" height="18" viewBox="0 0 15 18" fill="none" stroke="#444" stroke-width="1.7"><path d="M2.900 .900H9.300L14 5.600V15.300a1.900 1.900 0 0 1-1.900 1.900H2.900A1.900 1.900 0 0 1 1 15.300V2.800A1.900 1.900 0 0 1 2.900 .900Z" stroke-linejoin="round"/><path d="M9 .900V4.400a1.400 1.400 0 0 0 1.400 1.400H14Z" fill="#444" stroke-width="1"/><path d="M4.600 10.200h5.800M4.600 13.400h5.800" stroke-width="1.500"/></svg>
<div class="hl" style="top:412.5px"></div>
<svg style="left:41.0px;top:380.5px" width="19" height="18" viewBox="0 0 19 18" fill="#333"><path d="M.2 18L1.500 12.200L10.600 3.100L15.100 7.600L6 16.700Z"/><path d="M11.600 2.100L13.300 .500a1.700 1.700 0 0 1 2.400 0L17.800 2.600a1.700 1.700 0 0 1 0 2.400L16.100 6.600Z"/><path d="M2.700 14.200L4.200 15.700L2.300 16.100Z" fill="#fff"/></svg>
<div class="c" style="left:89.500px;top:382.5px">00000006</div>
<div class="c" style="left:267.500px;top:382.5px"><span class="fit" style="transform:scaleX(1.0000);margin-right:-0.00px">データ</span>6</div>
<div class="c" style="left:453px;width:185.500px;text-align:right;top:382.5px">6</div>
<div class="c" style="left:646px;width:185.500px;text-align:right;top:382.5px">6.66</div>
<div class="c" style="left:846.500px;top:382.5px">2023/12/16</div>
<div class="c" style="left:1039.500px;top:382.5px">false</div>
<div class="c" style="left:1232.500px;top:382.5px">terada</div>
<div class="c" style="left:1425.500px;top:382.5px">sekine</div>
<svg style="left:1635.0px;top:380.0px" width="15" height="18" viewBox="0 0 15 18" fill="none" stroke="#444" stroke-width="1.7"><path d="M2.900 .900H9.300L14 5.600V15.300a1.900 1.900 0 0 1-1.900 1.900H2.900A1.900 1.900 0 0 1 1 15.300V2.800A1.900 1.900 0 0 1 2.900 .900Z" stroke-linejoin="round"/><path d="M9 .900V4.400a1.400 1.400 0 0 0 1.400 1.400H14Z" fill="#444" stroke-width="1"/><path d="M4.600 10.200h5.800M4.600 13.400h5.800" stroke-width="1.500"/></svg>
<div class="hl" style="top:455.5px"></div>
<svg style="left:41.0px;top:423.5px" width="19" height="18" viewBox="0 0 19 18" fill="#333"><path d="M.2 18L1.500 12.200L10.600 3.100L15.100 7.600L6 16.700Z"/><path d="M11.600 2.100L13.300 .500a1.700 1.700 0 0 1 2.400 0L17.800 2.600a1.700 1.700 0 0 1 0 2.400L16.100 6.600Z"/><path d="M2.700 14.200L4.200 15.700L2.300 16.100Z" fill="#fff"/></svg>
<div class="c" style="left:89.500px;top:425.5px">00000007</div>
<div class="c" style="left:267.500px;top:425.5px"><span class="fit" style="transform:scaleX(1.0000);margin-right:-0.00px">データ</span>7</div>
<div class="c" style="left:453px;width:185.500px;text-align:right;top:425.5px">7</div>
<div class="c" style="left:646px;width:185.500px;text-align:right;top:425.5px">7.77</div>
<div class="c" style="left:846.500px;top:425.5px">2023/12/17</div>
<div class="c" style="left:1039.500px;top:425.5px">true</div>
<div class="c" style="left:1232.500px;top:425.5px">aoyagi</div>
<div class="c" style="left:1425.500px;top:425.5px">tenant</div>
<svg style="left:1635.0px;top:423.0px" width="15" height="18" viewBox="0 0 15 18" fill="none" stroke="#444" stroke-width="1.7"><path d="M2.900 .900H9.300L14 5.600V15.300a1.900 1.900 0 0 1-1.900 1.900H2.900A1.900 1.900 0 0 1 1 15.300V2.800A1.900 1.900 0 0 1 2.900 .900Z" stroke-linejoin="round"/><path d="M9 .900V4.400a1.400 1.400 0 0 0 1.400 1.400H14Z" fill="#444" stroke-width="1"/><path d="M4.600 10.200h5.800M4.600 13.400h5.800" stroke-width="1.500"/></svg>
<div class="hl" style="top:498.5px"></div>
<svg style="left:41.0px;top:466.5px" width="19" height="18" viewBox="0 0 19 18" fill="#333"><path d="M.2 18L1.500 12.200L10.600 3.100L15.100 7.600L6 16.700Z"/><path d="M11.600 2.100L13.300 .500a1.700 1.700 0 0 1 2.400 0L17.800 2.600a1.700 1.700 0 0 1 0 2.400L16.100 6.600Z"/><path d="M2.700 14.200L4.200 15.700L2.300 16.100Z" fill="#fff"/></svg>
<div class="c" style="left:89.500px;top:468.5px">00000008</div>
<div class="c" style="left:267.500px;top:468.5px"><span class="fit" style="transform:scaleX(1.0000);margin-right:-0.00px">データ</span>8</div>
<div class="c" style="left:453px;width:185.500px;text-align:right;top:468.5px">8</div>
<div class="c" style="left:646px;width:185.500px;text-align:right;top:468.5px">8.88</div>
<div class="c" style="left:846.500px;top:468.5px">2023/12/18</div>
<div class="c" style="left:1039.500px;top:468.5px">true</div>
<div class="c" style="left:1232.500px;top:468.5px">hayashi</div>
<div class="c" style="left:1425.500px;top:468.5px">aoyagi</div>
<svg style="left:1635.0px;top:466.0px" width="15" height="18" viewBox="0 0 15 18" fill="none" stroke="#444" stroke-width="1.7"><path d="M2.900 .900H9.300L14 5.600V15.300a1.900 1.900 0 0 1-1.900 1.900H2.900A1.900 1.900 0 0 1 1 15.300V2.800A1.900 1.900 0 0 1 2.900 .900Z" stroke-linejoin="round"/><path d="M9 .900V4.400a1.400 1.400 0 0 0 1.400 1.400H14Z" fill="#444" stroke-width="1"/><path d="M4.600 10.200h5.800M4.600 13.400h5.800" stroke-width="1.500"/></svg>
<div class="hl" style="top:541.5px"></div>
<svg style="left:41.0px;top:509.5px" width="19" height="18" viewBox="0 0 19 18" fill="#333"><path d="M.2 18L1.500 12.200L10.600 3.100L15.100 7.600L6 16.700Z"/><path d="M11.600 2.100L13.300 .500a1.700 1.700 0 0 1 2.400 0L17.800 2.600a1.700 1.700 0 0 1 0 2.400L16.100 6.600Z"/><path d="M2.700 14.200L4.200 15.700L2.300 16.100Z" fill="#fff"/></svg>
<div class="c" style="left:89.500px;top:511.5px">00000009</div>
<div class="c" style="left:267.500px;top:511.5px"><span class="fit" style="transform:scaleX(1.0000);margin-right:-0.00px">データ</span>9</div>
<div class="c" style="left:453px;width:185.500px;text-align:right;top:511.5px">9</div>
<div class="c" style="left:646px;width:185.500px;text-align:right;top:511.5px">9.99</div>
<div class="c" style="left:846.500px;top:511.5px">2023/12/19</div>
<div class="c" style="left:1039.500px;top:511.5px">true</div>
<div class="c" style="left:1232.500px;top:511.5px">ueda</div>
<div class="c" style="left:1425.500px;top:511.5px">hayashi</div>
<svg style="left:1635.0px;top:509.0px" width="15" height="18" viewBox="0 0 15 18" fill="none" stroke="#444" stroke-width="1.7"><path d="M2.900 .900H9.300L14 5.600V15.300a1.900 1.900 0 0 1-1.900 1.900H2.900A1.900 1.900 0 0 1 1 15.300V2.800A1.900 1.900 0 0 1 2.900 .900Z" stroke-linejoin="round"/><path d="M9 .900V4.400a1.400 1.400 0 0 0 1.400 1.400H14Z" fill="#444" stroke-width="1"/><path d="M4.600 10.200h5.800M4.600 13.400h5.800" stroke-width="1.500"/></svg>
<div class="hl" style="top:584.5px"></div>
<svg style="left:41.0px;top:552.5px" width="19" height="18" viewBox="0 0 19 18" fill="#333"><path d="M.2 18L1.500 12.200L10.600 3.100L15.100 7.600L6 16.700Z"/><path d="M11.600 2.100L13.300 .500a1.700 1.700 0 0 1 2.400 0L17.800 2.600a1.700 1.700 0 0 1 0 2.400L16.100 6.600Z"/><path d="M2.700 14.200L4.200 15.700L2.300 16.100Z" fill="#fff"/></svg>
<div class="c" style="left:89.500px;top:554.5px">00000010</div>
<div class="c" style="left:267.500px;top:554.5px"><span class="fit" style="transform:scaleX(1.0000);margin-right:-0.00px">データ</span>10</div>
<div class="c" style="left:453px;width:185.500px;text-align:right;top:554.5px">0</div>
<div class="c" style="left:646px;width:185.500px;text-align:right;top:554.5px">11.1</div>
<div class="c" style="left:846.500px;top:554.5px">2023/12/20</div>
<div class="c" style="left:1039.500px;top:554.5px">false</div>
<div class="c" style="left:1232.500px;top:554.5px">maruyama</div>
<div class="c" style="left:1425.500px;top:554.5px">ueda</div>
<svg style="left:1635.0px;top:552.0px" width="15" height="18" viewBox="0 0 15 18" fill="none" stroke="#444" stroke-width="1.7"><path d="M2.900 .900H9.300L14 5.600V15.300a1.900 1.900 0 0 1-1.900 1.900H2.900A1.900 1.900 0 0 1 1 15.300V2.800A1.900 1.900 0 0 1 2.900 .900Z" stroke-linejoin="round"/><path d="M9 .900V4.400a1.400 1.400 0 0 0 1.400 1.400H14Z" fill="#444" stroke-width="1"/><path d="M4.600 10.200h5.800M4.600 13.400h5.800" stroke-width="1.500"/></svg>
<div class="hl" style="top:627.5px"></div>
<svg style="left:41.0px;top:595.5px" width="19" height="18" viewBox="0 0 19 18" fill="#333"><path d="M.2 18L1.500 12.200L10.600 3.100L15.100 7.600L6 16.700Z"/><path d="M11.600 2.100L13.300 .500a1.700 1.700 0 0 1 2.400 0L17.800 2.600a1.700 1.700 0 0 1 0 2.400L16.100 6.600Z"/><path d="M2.700 14.200L4.200 15.700L2.300 16.100Z" fill="#fff"/></svg>
<div class="c" style="left:89.500px;top:597.5px">00000011</div>
<div class="c" style="left:267.500px;top:597.5px"><span class="fit" style="transform:scaleX(1.0000);margin-right:-0.00px">データ</span>11</div>
<div class="c" style="left:453px;width:185.500px;text-align:right;top:597.5px">11</div>
<div class="c" style="left:646px;width:185.500px;text-align:right;top:597.5px">12.21</div>
<div class="c" style="left:846.500px;top:597.5px">2023/12/21</div>
<div class="c" style="left:1039.500px;top:597.5px">false</div>
<div class="c" style="left:1232.500px;top:597.5px">sekine</div>
<div class="c" style="left:1425.500px;top:597.5px">maruyama</div>
<svg style="left:1635.0px;top:595.0px" width="15" height="18" viewBox="0 0 15 18" fill="none" stroke="#444" stroke-width="1.7"><path d="M2.900 .900H9.300L14 5.600V15.300a1.900 1.900 0 0 1-1.900 1.900H2.900A1.900 1.900 0 0 1 1 15.300V2.800A1.900 1.900 0 0 1 2.900 .900Z" stroke-linejoin="round"/><path d="M9 .900V4.400a1.400 1.400 0 0 0 1.400 1.400H14Z" fill="#444" stroke-width="1"/><path d="M4.600 10.200h5.800M4.600 13.400h5.800" stroke-width="1.500"/></svg>
<svg style="left:41.0px;top:638.5px" width="19" height="18" viewBox="0 0 19 18" fill="#333"><path d="M.2 18L1.500 12.200L10.600 3.100L15.100 7.600L6 16.700Z"/><path d="M11.600 2.100L13.300 .500a1.700 1.700 0 0 1 2.400 0L17.800 2.600a1.700 1.700 0 0 1 0 2.400L16.100 6.600Z"/><path d="M2.700 14.200L4.200 15.700L2.300 16.100Z" fill="#fff"/></svg>
<div class="c" style="left:89.500px;top:640.5px">00000012</div>
<div class="c" style="left:267.500px;top:640.5px"><span class="fit" style="transform:scaleX(1.0000);margin-right:-0.00px">データ</span>12</div>
<div class="c" style="left:453px;width:185.500px;text-align:right;top:640.5px">12</div>
<div class="c" style="left:646px;width:185.500px;text-align:right;top:640.5px">13.32</div>
<div class="c" style="left:846.500px;top:640.5px">2023/12/22</div>
<div class="c" style="left:1039.500px;top:640.5px">false</div>
<div class="c" style="left:1232.500px;top:640.5px">terada</div>
<div class="c" style="left:1425.500px;top:640.5px">sekine</div>
<svg style="left:1635.0px;top:638.0px" width="15" height="18" viewBox="0 0 15 18" fill="none" stroke="#444" stroke-width="1.7"><path d="M2.900 .900H9.300L14 5.600V15.300a1.900 1.900 0 0 1-1.900 1.900H2.900A1.900 1.900 0 0 1 1 15.300V2.800A1.900 1.900 0 0 1 2.900 .900Z" stroke-linejoin="round"/><path d="M9 .900V4.400a1.400 1.400 0 0 0 1.400 1.400H14Z" fill="#444" stroke-width="1"/><path d="M4.600 10.200h5.800M4.600 13.400h5.800" stroke-width="1.500"/></svg>
<div class="a" style="left:18px;top:652px;width:1674px;height:40px;background:#eeeeee;border:1px solid #dedede"></div>
<svg style="left:26px;top:664px" width="42" height="16" viewBox="0 0 42 16" fill="none" stroke="#c8c8c8" stroke-width="1.300"><path d="M7 1L1 8l6 7M13 1L7 8l6 7M41 1l-6 7 6 7"/></svg>
<div class="t" style="left:87px;top:665px;font-size:14px;color:#555">2 <span class="fit" style="transform:scaleX(1.0000)">ページ中</span></div>
<div class="a" style="left:162px;top:661px;width:66px;height:22px;background:#fff;border:1px solid #dcdcdc;border-radius:3px"></div>
<div class="t" style="left:168px;top:666px;font-size:13px;color:#333">1</div>
<div class="t" style="left:236px;top:665px;font-size:14px;color:#555"><span class="fit" style="transform:scaleX(0.9821)">ページ目</span></div>
<svg style="left:306px;top:664px" width="48" height="16" viewBox="0 0 48 16" fill="none" stroke="#8a8a8a" stroke-width="1.300"><path d="M1 1l7 7-7 7M32 1l6 7-6 7M38 1l6 7-6 7M47 1v14"/></svg>
<div class="a" style="left:499px;top:660px;width:57px;height:24px;background:#fff;border:1px solid #dcdcdc;border-radius:3px"></div>
<div class="t" style="left:508px;top:665.500px;font-size:13px;color:#333">20</div>
<svg style="left:537px;top:669px" width="10" height="7" viewBox="0 0 10 7"><path d="M1.200 1.200l3.800 3.800 3.800-3.800" fill="none" stroke="#222" stroke-width="1.900"/></svg>
<div class="t" style="left:563px;top:665px;font-size:14px;color:#555">40 <span class="fit" style="transform:scaleX(1.0000);margin-right:-0.00px">件中</span> 1 - 20 <span class="fit" style="transform:scaleX(1.0000)">を表示</span></div>
</div>
<svg style="left:0;top:0" width="1962" height="1788" viewBox="0 0 1962 1788" fill="#fff" stroke="#3c3c3c" stroke-width="1.900" stroke-linejoin="miter"><path d="M831.800 498.800H1007.200V465.700L1086.600 542.500L1007.200 619.100V586H831.800Z"/><path d="M1417.900 952.300L1479.900 1013.800L1355.700 1137.700L1378.900 1161.200L1267.900 1163.800L1270.200 1052.500L1293.700 1076.200Z"/></svg></body></html>
